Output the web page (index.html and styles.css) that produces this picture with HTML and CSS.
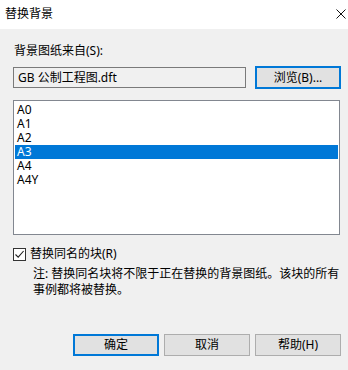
FILE: index.html
```html
<!DOCTYPE html>
<html lang="zh-CN">
<head>
  <meta charset="UTF-8">
  <title>替换背景</title>
  <link rel="stylesheet" href="styles.css">
</head>
<body>
  <div class="window">
    <!-- Title bar -->
    <div class="titlebar">
      <span class="title">替换背景</span>
      <svg class="close" width="10" height="10" viewBox="0 0 10 10">
        <path d="M0.5 0.5 L9.5 9.5 M9.5 0.5 L0.5 9.5" stroke="#111" stroke-width="1" fill="none"/>
      </svg>
    </div>

    <div class="content">
      <div class="label">背景图纸来自(S):</div>

      <div class="file-row">
        <div class="textbox">GB 公制工程图.dft</div>
        <button class="btn btn-focus browse">浏览(B)...</button>
      </div>

      <ul class="listbox">
        <li>A0</li>
        <li>A1</li>
        <li>A2</li>
        <li class="selected">A3</li>
        <li>A4</li>
        <li>A4Y</li>
      </ul>

      <label class="check-row">
        <span class="checkbox">
          <svg width="11" height="11" viewBox="0 0 11 11">
            <path d="M1.5 5.5 L4.2 8.2 L9.6 2" stroke="#222" stroke-width="1.1" fill="none"/>
          </svg>
        </span>
        替换同名的块(R)
      </label>

      <p class="note">注: 替换同名块将不限于正在替换的背景图纸。该块的所有事例都将被替换。</p>

      <div class="buttons">
        <button class="btn btn-focus">确定</button>
        <button class="btn">取消</button>
        <button class="btn">帮助(H)</button>
      </div>
    </div>
  </div>
</body>
</html>
```

FILE: styles.css
```css
body {
  margin: 0;
  font-family: "Noto Sans", "Noto Sans CJK SC", sans-serif;
  font-size: 12px;
  color: #000;
  background-color: #f0f0f0;
}

.window {
  width: 348px;
  height: 370px;
  display: flex;
  flex-direction: column;
}

.titlebar {
  height: 29px;
  background-color: #fff;
  display: flex;
  align-items: center;
  justify-content: space-between;
  padding: 0 2px 0 5px;
}

.title {
  font-size: 12px;
  line-height: 16px;
  margin-top: -1px;
}

.close {
  margin-right: 0;
  margin-top: -1px;
}

.content {
  flex: 1;
  display: flex;
  flex-direction: column;
  padding: 14px 7px 0 13px;
}

.label {
  line-height: 16px;
  padding-left: 1px;
}

/* File row */
.file-row {
  display: flex;
  gap: 9px;
  margin-top: 7px;
  align-items: flex-start;
}

.textbox {
  width: 233px;
  height: 21px;
  box-sizing: border-box;
  margin-top: 1px;
  border: 1px solid #7a7a7a;
  background-color: #f0f0f0;
  line-height: 19px;
  padding-left: 4px;
  white-space: nowrap;
}

.btn {
  width: 86px;
  height: 22px;
  box-sizing: border-box;
  border: 1px solid #adadad;
  background-color: #e1e1e1;
  font-family: inherit;
  font-size: 12px;
  color: #000;
  padding: 0;
  line-height: 18px;
}

.btn-focus {
  border: 2px solid #0078d7;
}

.browse {
  height: 23px;
}

/* List of sheets */
.listbox {
  list-style: none;
  margin: 11px 1px 0 0;
  padding: 2px 1px 0;
  height: 135px;
  box-sizing: border-box;
  border: 1px solid #828790;
  background-color: #fff;
}

.listbox li {
  height: 14px;
  line-height: 14px;
  padding-left: 2px;
}

.listbox .selected {
  background-color: #0078d7;
  color: #fff;
}

/* Checkbox */
.check-row {
  display: flex;
  align-items: center;
  gap: 4px;
  margin-top: 11px;
  line-height: 16px;
}

.checkbox {
  width: 13px;
  height: 13px;
  box-sizing: border-box;
  border: 1px solid #333;
  background-color: #fff;
  display: flex;
  align-items: center;
  justify-content: center;
}

.note {
  margin: 4px 0 0 20px;
  line-height: 16px;
}

.buttons {
  display: flex;
  justify-content: flex-end;
  gap: 5px;
  margin-top: 36px;
}
```
